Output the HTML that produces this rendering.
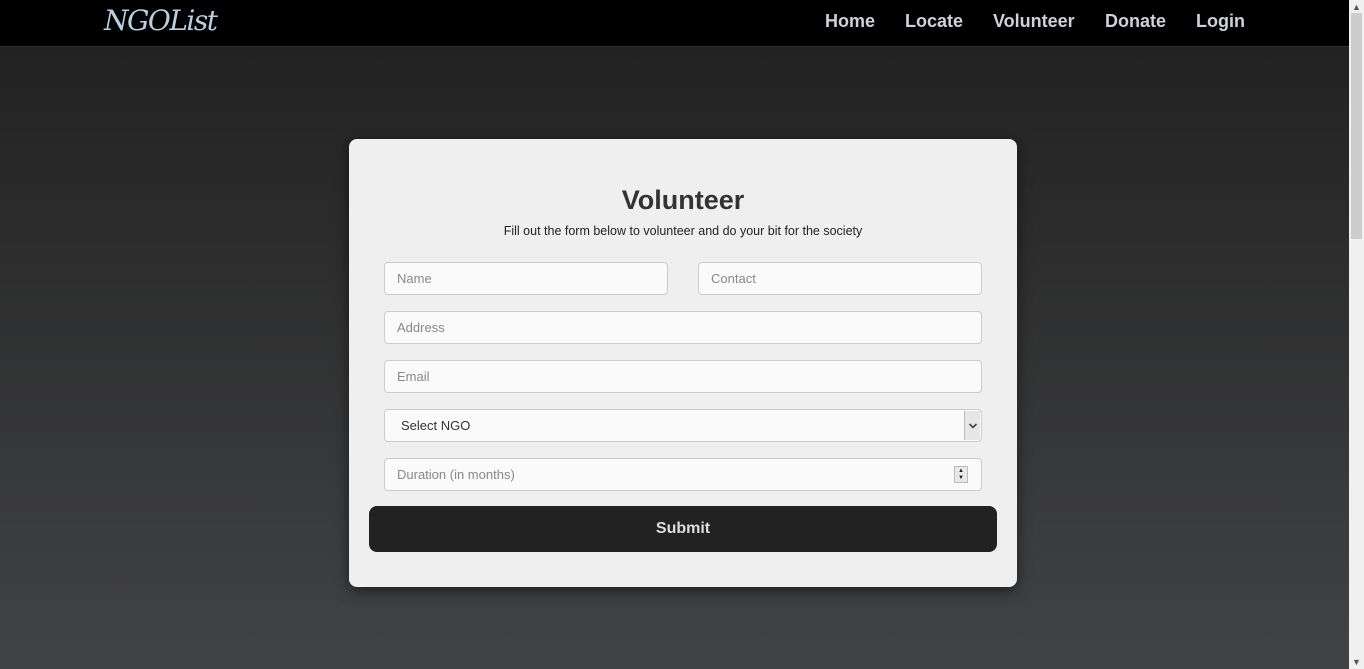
<!DOCTYPE html>
<html><head><meta charset="utf-8"><style>
*{box-sizing:border-box;margin:0;padding:0}
html,body{width:1364px;height:669px;overflow:hidden}
body{font-family:"Liberation Sans",sans-serif;background:linear-gradient(#222 47px,#252525 100px,#424345 669px);position:relative}
.nav{position:absolute;left:0;top:0;width:1349px;height:47px;background:#000;border-bottom:1px solid #333}
.logo{position:absolute;left:104px;top:4px;font-family:"DejaVu Serif","Liberation Serif",serif;font-style:italic;font-size:28px;color:#b9cfe2;letter-spacing:-1.5px}
.links{position:absolute;top:11px;font-weight:bold;font-size:18px;color:#cdd3d8}
.links span{position:absolute;white-space:nowrap}
.sb{position:absolute;left:1349px;top:0;width:15px;height:669px;background:#f0f0f0}
.sb .th{position:absolute;left:2px;top:13px;width:11px;height:226px;background:#cdcdcd}
.card{position:absolute;left:349px;top:139px;width:668px;height:448px;background:#efefef;border-radius:8px;box-shadow:0 4px 14px rgba(0,0,0,.5);font-family:"Liberation Sans",sans-serif}
h1{position:absolute;left:0;width:100%;top:46px;text-align:center;font-size:27px;color:#333;font-weight:bold}
.sub{position:absolute;left:0;width:100%;top:85px;text-align:center;font-size:12.5px;color:#222}
.in{position:absolute;height:33px;background:#fafafa;border:1px solid #ccc;border-radius:4px;font-size:13px;color:#888;padding:8px 12px}
.btn{position:absolute;left:20px;top:367px;width:628px;height:46px;background:#222;border-radius:8px;color:#ddd;font-weight:bold;font-size:16px;text-align:center;line-height:46px}
</style></head><body>
<div class="nav"><div class="logo">NGOList</div>
<div class="links"><span style="left:825px">Home</span><span style="left:905px">Locate</span><span style="left:993px">Volunteer</span><span style="left:1105px">Donate</span><span style="left:1196px">Login</span></div></div>
<div class="sb"><div style="position:absolute;left:3px;top:2px;font-size:9px;color:#555">&#9650;</div><div class="th"></div><div style="position:absolute;left:3px;bottom:2px;font-size:9px;color:#555">&#9660;</div></div>
<div class="card">
<h1>Volunteer</h1>
<div class="sub">Fill out the form below to volunteer and do your bit for the society</div>
<div class="in" style="left:35px;top:123px;width:284px">Name</div>
<div class="in" style="left:349px;top:123px;width:284px">Contact</div>
<div class="in" style="left:35px;top:172px;width:598px">Address</div>
<div class="in" style="left:35px;top:221px;width:598px">Email</div>
<div class="in" style="left:35px;top:270px;width:598px;color:#333;padding-left:16px">Select NGO<div style="position:absolute;right:1px;top:1px;width:16px;height:29px;background:#e6e6e6;border-left:1px solid #bbb"><svg width="16" height="29" viewBox="0 0 16 29" style="position:absolute;left:0;top:0"><path d="M4.5 13 L8 16.5 L11.5 13" stroke="#444" stroke-width="1.6" fill="none"/></svg></div></div>
<div class="in" style="left:35px;top:319px;width:598px">Duration (in months)<div style="position:absolute;right:13px;top:7px;width:14px;height:17px;background:#e8e8e8;border:1px solid #bbb;font-size:6px;color:#222;text-align:center;line-height:7px;padding-top:1px">&#9650;<br>&#9660;</div></div>
<div class="btn">Submit</div>
</div>
</body></html>
